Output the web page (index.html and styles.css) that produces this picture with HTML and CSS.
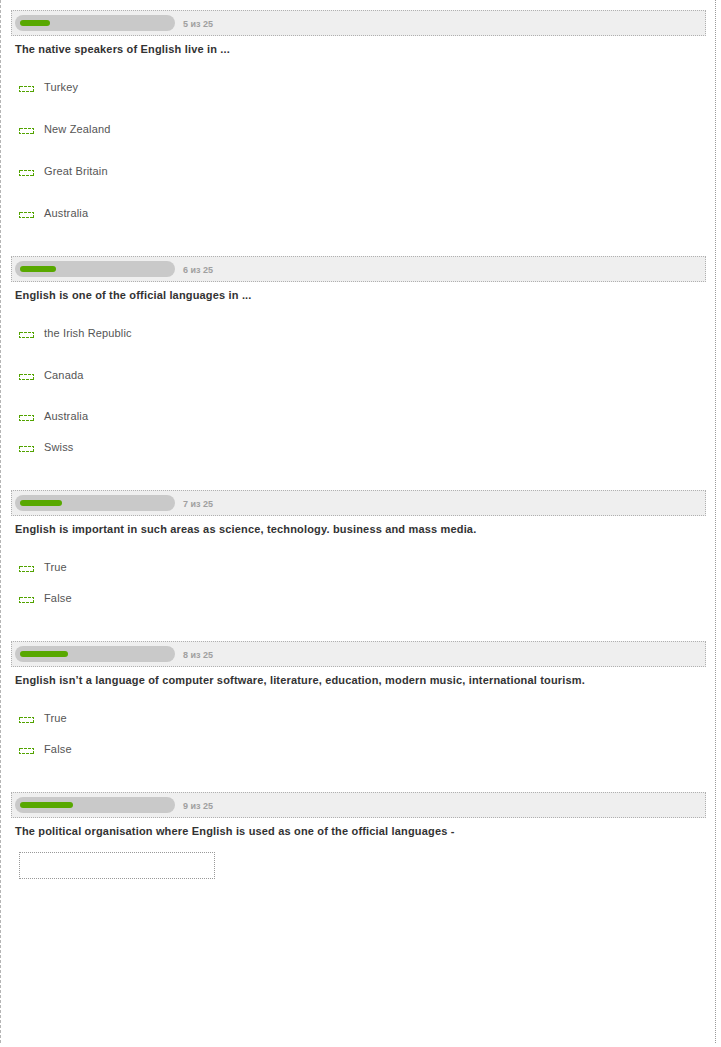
FILE: index.html
```html
<!DOCTYPE html>
<html lang="en">
<head>
<meta charset="utf-8">
<title>Test</title>
<link rel="stylesheet" href="styles.css">
</head>
<body>
<div class="page">

  <section class="task">
    <div class="task-head">
      <div class="track"><div class="fill" style="width:30px"></div></div>
      <span class="count">5 из 25</span>
    </div>
    <p class="question">The native speakers of English live in ...</p>
    <ul class="options">
      <li class="opt opt--spaced"><svg class="mark" viewBox="0 0 15 6" width="15" height="6"><rect x="0.5" y="0.5" width="14" height="5" fill="none" stroke="#52a300" stroke-width="1" stroke-dasharray="3 1" shape-rendering="crispEdges"/></svg><span>Turkey</span></li>
      <li class="opt opt--spaced"><svg class="mark" viewBox="0 0 15 6" width="15" height="6"><rect x="0.5" y="0.5" width="14" height="5" fill="none" stroke="#52a300" stroke-width="1" stroke-dasharray="3 1" shape-rendering="crispEdges"/></svg><span>New Zealand</span></li>
      <li class="opt opt--spaced"><svg class="mark" viewBox="0 0 15 6" width="15" height="6"><rect x="0.5" y="0.5" width="14" height="5" fill="none" stroke="#52a300" stroke-width="1" stroke-dasharray="3 1" shape-rendering="crispEdges"/></svg><span>Great Britain</span></li>
      <li class="opt"><svg class="mark" viewBox="0 0 15 6" width="15" height="6"><rect x="0.5" y="0.5" width="14" height="5" fill="none" stroke="#52a300" stroke-width="1" stroke-dasharray="3 1" shape-rendering="crispEdges"/></svg><span>Australia</span></li>
    </ul>
  </section>

  <section class="task">
    <div class="task-head">
      <div class="track"><div class="fill" style="width:36px"></div></div>
      <span class="count">6 из 25</span>
    </div>
    <p class="question">English is one of the official languages in ...</p>
    <ul class="options">
      <li class="opt opt--spaced"><svg class="mark" viewBox="0 0 15 6" width="15" height="6"><rect x="0.5" y="0.5" width="14" height="5" fill="none" stroke="#52a300" stroke-width="1" stroke-dasharray="3 1" shape-rendering="crispEdges"/></svg><span>the Irish Republic</span></li>
      <li class="opt opt--spaced opt--tight"><svg class="mark" viewBox="0 0 15 6" width="15" height="6"><rect x="0.5" y="0.5" width="14" height="5" fill="none" stroke="#52a300" stroke-width="1" stroke-dasharray="3 1" shape-rendering="crispEdges"/></svg><span>Canada</span></li>
      <li class="opt"><svg class="mark" viewBox="0 0 15 6" width="15" height="6"><rect x="0.5" y="0.5" width="14" height="5" fill="none" stroke="#52a300" stroke-width="1" stroke-dasharray="3 1" shape-rendering="crispEdges"/></svg><span>Australia</span></li>
      <li class="opt"><svg class="mark" viewBox="0 0 15 6" width="15" height="6"><rect x="0.5" y="0.5" width="14" height="5" fill="none" stroke="#52a300" stroke-width="1" stroke-dasharray="3 1" shape-rendering="crispEdges"/></svg><span>Swiss</span></li>
    </ul>
  </section>

  <section class="task">
    <div class="task-head">
      <div class="track"><div class="fill" style="width:42px"></div></div>
      <span class="count">7 из 25</span>
    </div>
    <p class="question">English is important in such areas as science, technology. business and mass media.</p>
    <ul class="options">
      <li class="opt"><svg class="mark" viewBox="0 0 15 6" width="15" height="6"><rect x="0.5" y="0.5" width="14" height="5" fill="none" stroke="#52a300" stroke-width="1" stroke-dasharray="3 1" shape-rendering="crispEdges"/></svg><span>True</span></li>
      <li class="opt"><svg class="mark" viewBox="0 0 15 6" width="15" height="6"><rect x="0.5" y="0.5" width="14" height="5" fill="none" stroke="#52a300" stroke-width="1" stroke-dasharray="3 1" shape-rendering="crispEdges"/></svg><span>False</span></li>
    </ul>
  </section>

  <section class="task">
    <div class="task-head">
      <div class="track"><div class="fill" style="width:48px"></div></div>
      <span class="count">8 из 25</span>
    </div>
    <p class="question">English isn’t a language of computer software, literature, education, modern music, international tourism.</p>
    <ul class="options">
      <li class="opt"><svg class="mark" viewBox="0 0 15 6" width="15" height="6"><rect x="0.5" y="0.5" width="14" height="5" fill="none" stroke="#52a300" stroke-width="1" stroke-dasharray="3 1" shape-rendering="crispEdges"/></svg><span>True</span></li>
      <li class="opt"><svg class="mark" viewBox="0 0 15 6" width="15" height="6"><rect x="0.5" y="0.5" width="14" height="5" fill="none" stroke="#52a300" stroke-width="1" stroke-dasharray="3 1" shape-rendering="crispEdges"/></svg><span>False</span></li>
    </ul>
  </section>

  <section class="task">
    <div class="task-head">
      <div class="track"><div class="fill" style="width:53px"></div></div>
      <span class="count">9 из 25</span>
    </div>
    <p class="question">The political organisation where English is used as one of the official languages -</p>
    <input class="answer" type="text" aria-label="Answer">
  </section>

</div>
</body>
</html>
```

FILE: styles.css
```css
* { box-sizing: border-box; }

html, body {
  margin: 0;
  padding: 0;
  background: #fff;
}

body {
  font-family: "Liberation Sans", Arial, sans-serif;
  color: #333;
}

.page {
  width: 716px;
  height: 1043px;
  border-left: 1px dashed #b5b5b5;
  border-right: 1px dotted #9a9a9a;
  padding: 10px 9px 0 10px;
}

.task {
  margin-bottom: 28px;
}

.task-head {
  display: flex;
  align-items: center;
  height: 26px;
  padding: 0 3px;
  background: #efefef;
  border: 1px dotted #b0b0b0;
}

.track {
  width: 160px;
  height: 16px;
  border-radius: 8px;
  background: #c9c9c9;
  display: flex;
  align-items: center;
  padding: 0 5px;
}

.fill {
  height: 6px;
  border-radius: 3px;
  background: #58a800;
}

.count {
  margin-left: 8px;
  font-size: 9px;
  font-weight: bold;
  color: #a0a0a0;
  padding-top: 2px;
}

.question {
  margin: 6px 0 0;
  padding-left: 4px;
  font-size: 11px;
  line-height: 14px;
  font-weight: bold;
  letter-spacing: 0.17px;
  color: #333;
}

.options {
  list-style: none;
  margin: 15px 0 0;
  padding: 0 0 0 8px;
}

.opt {
  display: flex;
  align-items: center;
  height: 31px;
  font-size: 11px;
  letter-spacing: 0.15px;
  color: #555;
}

.opt--spaced {
  height: 42px;
  padding-bottom: 11px;
}

.opt--tight {
  height: 41px;
  padding-bottom: 10px;
}

.mark {
  display: block;
  margin: 4px 10px 0 0;
  flex: none;
}

.answer {
  display: block;
  margin: 14px 0 0 8px;
  width: 196px;
  height: 27px;
  border: 1px dotted #999;
  background: #fff;
  padding: 0 4px;
  font: 11px "Liberation Sans", Arial, sans-serif;
  outline: none;
}
```
